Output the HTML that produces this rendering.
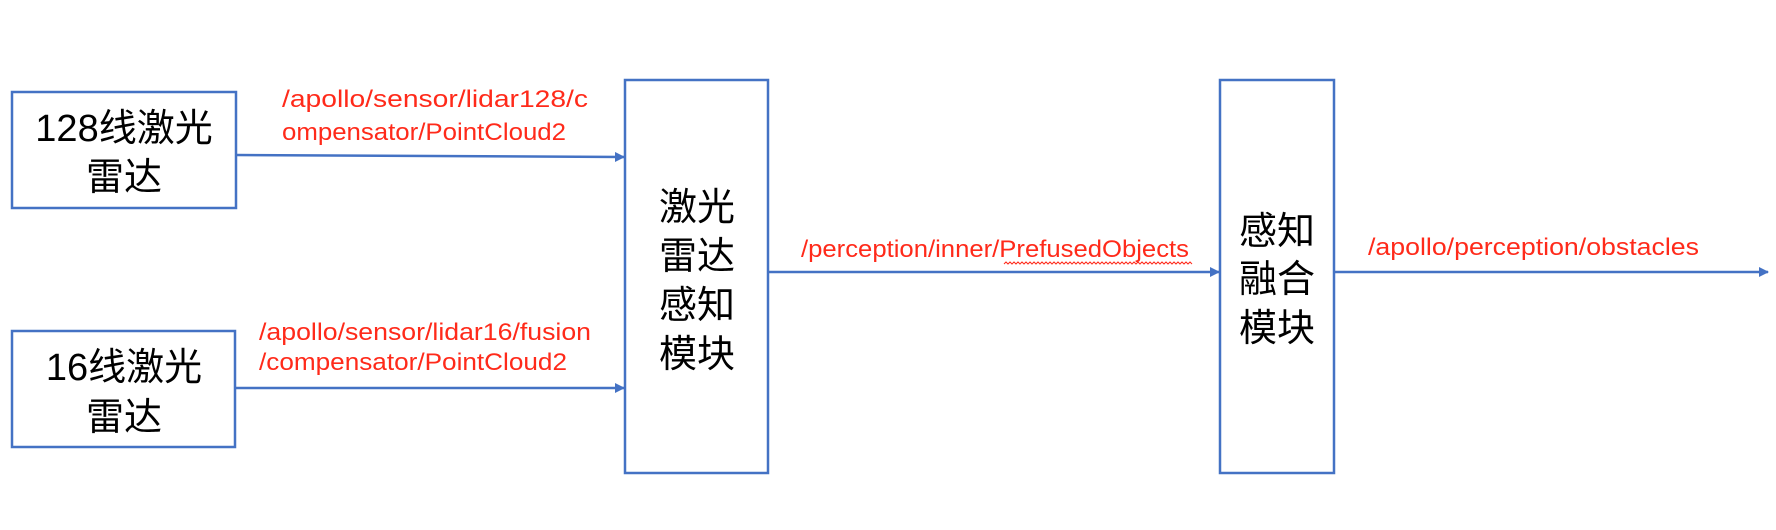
<!DOCTYPE html>
<html><head><meta charset="utf-8"><style>
html,body{margin:0;padding:0;background:#fff;}
svg{display:block}
.cn{font-family:"Liberation Sans","Noto Sans CJK SC",sans-serif;fill:#000}
.rd{font-family:"Liberation Sans","Noto Sans CJK SC",sans-serif;fill:#ff2a1a;font-size:24px}
</style></head><body>
<svg width="1776" height="530" viewBox="0 0 1776 530" xmlns="http://www.w3.org/2000/svg">
<defs><marker id="ar" markerWidth="10" markerHeight="10" refX="9" refY="5" orient="auto" markerUnits="userSpaceOnUse"><path d="M0,0 L10,5 L0,10 z" fill="#4472c4"/></marker></defs>
<g fill="none" stroke="#4472c4" stroke-width="2.5">
<rect x="12" y="92" width="224" height="116"/>
<rect x="12" y="331" width="223" height="116"/>
<rect x="625" y="80" width="143" height="393"/>
<rect x="1220" y="80" width="114" height="393"/>
<line x1="236" y1="155" x2="624" y2="157" marker-end="url(#ar)"/>
<line x1="235" y1="388" x2="624" y2="388" marker-end="url(#ar)"/>
<line x1="768" y1="272" x2="1219" y2="272" marker-end="url(#ar)"/>
<line x1="1334" y1="272" x2="1768" y2="272" marker-end="url(#ar)"/>
</g>
<g class="cn" font-size="38" text-anchor="middle">
<text x="124" y="141">128线激光</text>
<text x="124" y="190">雷达</text>
<text x="124" y="380">16线激光</text>
<text x="124" y="430">雷达</text>
</g>
<g class="cn" font-size="38" text-anchor="middle">
<text x="697" y="220">激光</text>
<text x="697" y="269">雷达</text>
<text x="697" y="318">感知</text>
<text x="697" y="367">模块</text>
<text x="1277" y="244">感知</text>
<text x="1277" y="292">融合</text>
<text x="1277" y="341">模块</text>
</g>
<text class="rd" x="282" y="107" textLength="306" lengthAdjust="spacingAndGlyphs">/apollo/sensor/lidar128/c</text>
<text class="rd" x="282" y="140" textLength="284" lengthAdjust="spacingAndGlyphs">ompensator/PointCloud2</text>
<text class="rd" x="259" y="340" textLength="332" lengthAdjust="spacingAndGlyphs">/apollo/sensor/lidar16/fusion</text>
<text class="rd" x="259" y="370" textLength="308" lengthAdjust="spacingAndGlyphs">/compensator/PointCloud2</text>
<text class="rd" x="801" y="257" textLength="388" lengthAdjust="spacingAndGlyphs">/perception/inner/PrefusedObjects</text>
<text class="rd" x="1368" y="255" textLength="331" lengthAdjust="spacingAndGlyphs">/apollo/perception/obstacles</text>
<path d="M1004,264 l2,-2 l2,2 l2,-2 l2,2 l2,-2 l2,2 l2,-2 l2,2 l2,-2 l2,2 l2,-2 l2,2 l2,-2 l2,2 l2,-2 l2,2 l2,-2 l2,2 l2,-2 l2,2 l2,-2 l2,2 l2,-2 l2,2 l2,-2 l2,2 l2,-2 l2,2 l2,-2 l2,2 l2,-2 l2,2 l2,-2 l2,2 l2,-2 l2,2 l2,-2 l2,2 l2,-2 l2,2 l2,-2 l2,2 l2,-2 l2,2 l2,-2 l2,2 l2,-2 l2,2 l2,-2 l2,2 l2,-2 l2,2 l2,-2 l2,2 l2,-2 l2,2 l2,-2 l2,2 l2,-2 l2,2 l2,-2 l2,2 l2,-2 l2,2 l2,-2 l2,2 l2,-2 l2,2 l2,-2 l2,2 l2,-2 l2,2 l2,-2 l2,2 l2,-2 l2,2 l2,-2 l2,2 l2,-2 l2,2 l2,-2 l2,2 l2,-2 l2,2 l2,-2 l2,2 l2,-2 l2,2 l2,-2 l2,2 l2,-2 l2,2 l2,-2 l2,2" fill="none" stroke="#ff2a1a" stroke-width="1"/>
</svg>
</body></html>
